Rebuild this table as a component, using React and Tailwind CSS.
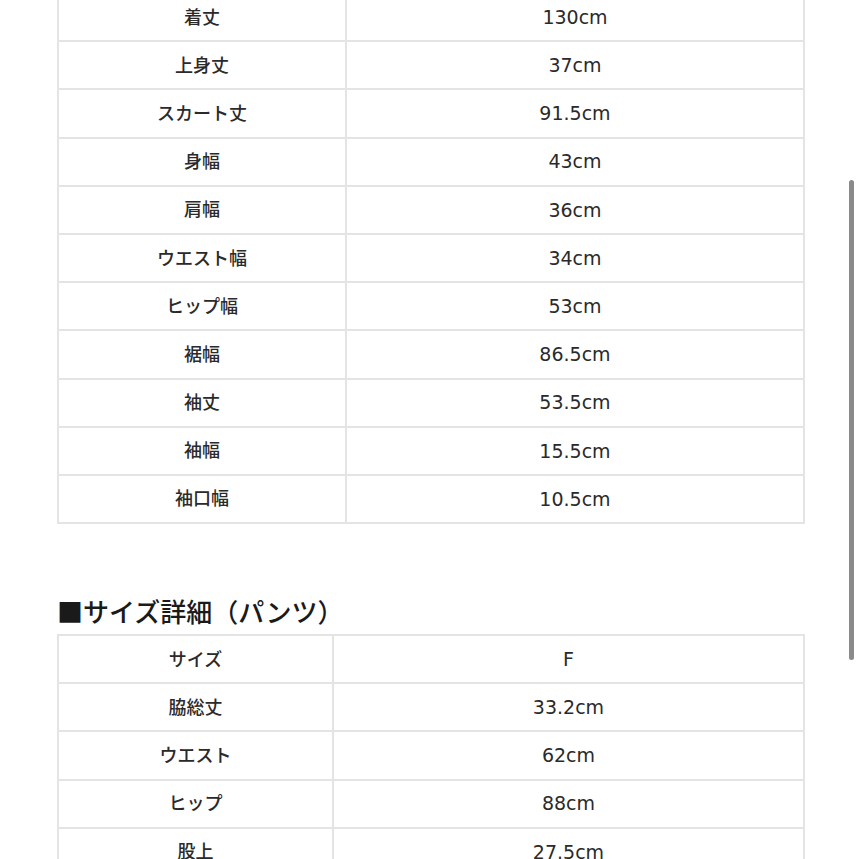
import React from 'react'

const topRows = [
  ['着丈', '130cm'],
  ['上身丈', '37cm'],
  ['スカート丈', '91.5cm'],
  ['身幅', '43cm'],
  ['肩幅', '36cm'],
  ['ウエスト幅', '34cm'],
  ['ヒップ幅', '53cm'],
  ['裾幅', '86.5cm'],
  ['袖丈', '53.5cm'],
  ['袖幅', '15.5cm'],
  ['袖口幅', '10.5cm'],
]

const pantsRows = [
  ['サイズ', 'F'],
  ['脇総丈', '33.2cm'],
  ['ウエスト', '62cm'],
  ['ヒップ', '88cm'],
  ['股上', '27.5cm'],
]

const SizeTable = ({ rows, labelWidth }) => (
  <table className="w-[748px] border-collapse table-fixed">
    <colgroup>
      <col className={labelWidth} />
      <col />
    </colgroup>
    <tbody>
      {rows.map(([label, value]) => (
        <tr key={label} className="h-[48.2px]">
          <td className="border-2 border-[#e4e4e4] text-center p-0 text-[18px]">{label}</td>
          <td className="border-2 border-[#e4e4e4] text-center p-0 text-[19px] font-normal">
            {value}
          </td>
        </tr>
      ))}
    </tbody>
  </table>
)

const App = () => {
  return (
    <div
      className="relative w-[859px] h-[859px] overflow-hidden bg-white text-[#2a2a2a] font-medium"
      style={{ fontFamily: '"DejaVu Sans", "Noto Sans CJK JP", sans-serif' }}
    >
      <div className="pl-[57px] mt-[-8px]">
        <SizeTable rows={topRows} labelWidth="w-[288px]" />
        <h2
          className="mt-[70px] mb-[6px] text-[26px] leading-[34px] font-medium text-[#1a1a1a]"
          style={{ fontFamily: '"Noto Sans CJK JP", sans-serif' }}
        >
          ■サイズ詳細（パンツ）
        </h2>
        <SizeTable rows={pantsRows} labelWidth="w-[275px]" />
      </div>
      {/* scrollbar */}
      <div className="absolute right-[5px] top-[180px] w-[5px] h-[480px] rounded-full bg-[#8a8a8a]" />
    </div>
  )
}

export default App
